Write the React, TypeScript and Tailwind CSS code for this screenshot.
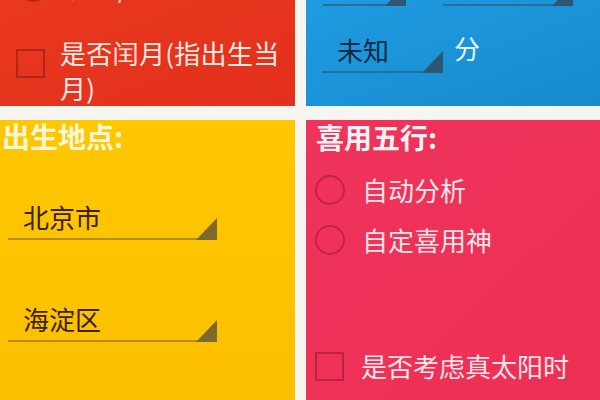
const cjk = { fontFamily: '"Noto Sans CJK SC", "Noto Sans", sans-serif' };

function Select({
  label,
  width,
  line,
  tri,
  text,
}: {
  label: string;
  width: string;
  line: string;
  tri: string;
  text: string;
}) {
  return (
    <div className={`flex items-end ${width}`}>
      <div className={`flex-1 border-b-2 ${line} pl-[15px] pb-[4px] text-[26px] leading-[34px] ${text}`}>
        {label || "\u00a0"}
      </div>
      <svg width="21" height="22" viewBox="0 0 21 22" className="-ml-[21px] shrink-0">
        <polygon points="21,0 21,22 0,22" fill={tri} />
      </svg>
    </div>
  );
}

function Box({ border }: { border: string }) {
  return <div className={`w-[29px] h-[29px] border-2 ${border} shrink-0`} />;
}

function Radio({ border }: { border: string }) {
  return <div className={`w-[30px] h-[30px] rounded-full border-2 ${border} shrink-0`} />;
}

export default function App() {
  return (
    <div
      className="w-[600px] h-[400px] overflow-hidden bg-[#f7f5ef] grid grid-cols-[295px_1fr] grid-rows-[106px_1fr] gap-x-[11px] gap-y-[14px]"
      style={cjk}
    >
      {/* 农历 panel */}
      <div className="bg-gradient-to-br from-[#e9381e] to-[#e2301c] overflow-hidden text-[#fde9e3]">
        <div className="-mt-[28px] flex items-center gap-[18px] pl-[18px]">
          <Radio border="border-[#b7281a]" />
          <span className="text-[26px] leading-[30px]">农历/公历</span>
        </div>
        <div className="flex items-start pl-[16px] pt-[33px]">
          <div className="mt-[14px]">
            <Box border="border-[#b2261a]" />
          </div>
          <div className="pl-[15px] text-[26px] leading-[35px] tracking-[0.3px]">
            是否闰月(指出生当
            <br />
            月)
          </div>
        </div>
      </div>

      {/* 时间 panel */}
      <div className="bg-gradient-to-br from-[#1f9be0] to-[#178bcf] overflow-hidden text-white">
        <div className="-mt-[34px] flex gap-[37px] pl-[17px]">
          <Select label="" width="w-[83px]" line="border-[#2a6d9c]" tri="#2d5673" text="text-[#0f2944]" />
          <Select label="" width="w-[130px]" line="border-[#2a6d9c]" tri="#2d5673" text="text-[#0f2944]" />
        </div>
        <div className="flex items-end pl-[16px] pt-[27px]">
          <Select label="未知" width="w-[121px]" line="border-[#2a6d9c]" tri="#2d5673" text="text-[#0f2944]" />
          <span className="ml-[11px] mb-[10px] text-[26px] leading-[30px] text-[#eaf6fc]">分</span>
        </div>
      </div>

      {/* 出生地点 */}
      <div className="bg-gradient-to-b from-[#fec700] to-[#fcbf00] overflow-hidden">
        <div className="pl-[2px] text-[28px] leading-[32px] font-bold text-[#fff6d8]">出生地点:</div>
        <div className="pl-[8px] pt-[48px] flex flex-col gap-[62px]">
          <Select label="北京市" width="w-[209px]" line="border-[#b48c12]" tri="#7c6a2c" text="text-[#3a2200]" />
          <Select label="海淀区" width="w-[209px]" line="border-[#b48c12]" tri="#7c6a2c" text="text-[#3a2200]" />
        </div>
      </div>

      {/* 喜用五行 */}
      <div className="bg-gradient-to-br from-[#ef335a] to-[#ee2f55] overflow-hidden text-[#fde6ea] flex flex-col pl-[9px]">
        <div className="pl-[1px] pt-[1px] text-[28px] leading-[32px] font-bold text-[#fff2f4]">喜用五行:</div>
        <div className="pt-[22px] flex flex-col gap-[20px]">
          <div className="flex items-center gap-[17px]">
            <Radio border="border-[#c22446]" />
            <span className="text-[26px] leading-[30px]">自动分析</span>
          </div>
          <div className="flex items-center gap-[17px]">
            <Radio border="border-[#c22446]" />
            <span className="text-[26px] leading-[30px]">自定喜用神</span>
          </div>
        </div>
        <div className="mt-auto mb-[19px] flex items-center gap-[17px]">
          <Box border="border-[#bc2244]" />
          <span className="text-[26px] leading-[30px]">是否考虑真太阳时</span>
        </div>
      </div>
    </div>
  );
}
